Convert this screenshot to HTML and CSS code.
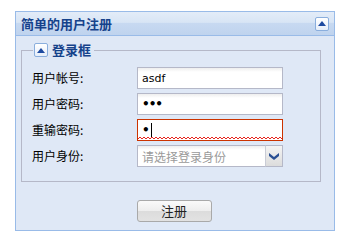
FILE: index.html
```html
<!DOCTYPE html>
<html lang="zh-CN">
<head>
<meta charset="utf-8">
<title>简单的用户注册</title>
<link rel="stylesheet" href="styles.css">
</head>
<body>
<div class="panel">
  <div class="panel-header">
    <span class="panel-title">简单的用户注册</span>
    <span class="tool"><svg width="8" height="5" viewBox="0 0 8 5"><path d="M0 5 L4 0 L8 5 Z" fill="#1d4aa0"/></svg></span>
  </div>
  <div class="panel-body">
    <div class="fieldset">
      <div class="legend">
        <span class="tool small"><svg width="8" height="5" viewBox="0 0 8 5"><path d="M0 5 L4 0 L8 5 Z" fill="#1d4aa0"/></svg></span>
        <span class="legend-text">登录框</span>
      </div>
      <div class="form">
        <label class="label">用户帐号:</label>
        <div class="field"><span class="val">asdf</span></div>
        <label class="label">用户密码:</label>
        <div class="field"><span class="val dots">•••</span></div>
        <label class="label">重输密码:</label>
        <div class="field invalid"><span class="val dots">•</span><span class="caret"></span>
          <svg class="zigzag" width="144" height="4" viewBox="0 0 144 4" preserveAspectRatio="none"><polyline points="0,3 2,1 4,3 6,1 8,3 10,1 12,3 14,1 16,3 18,1 20,3 22,1 24,3 26,1 28,3 30,1 32,3 34,1 36,3 38,1 40,3 42,1 44,3 46,1 48,3 50,1 52,3 54,1 56,3 58,1 60,3 62,1 64,3 66,1 68,3 70,1 72,3 74,1 76,3 78,1 80,3 82,1 84,3 86,1 88,3 90,1 92,3 94,1 96,3 98,1 100,3 102,1 104,3 106,1 108,3 110,1 112,3 114,1 116,3 118,1 120,3 122,1 124,3 126,1 128,3 130,1 132,3 134,1 136,3 138,1 140,3 142,1 144,3" fill="none" stroke="#e8241c" stroke-width="1"/></svg>
        </div>
        <label class="label">用户身份:</label>
        <div class="combo">
          <div class="field combo-input"><span class="val placeholder">请选择登录身份</span></div>
          <div class="trigger"><svg width="10" height="7" viewBox="0 0 10 7"><path d="M0 0 L5 4 L10 0 L10 3 L5 7 L0 3 Z" fill="#2a4f93"/></svg></div>
        </div>
      </div>
    </div>
    <div class="actions">
      <button class="btn" type="button">注册</button>
    </div>
  </div>
</div>
</body>
</html>
```
FILE: styles.css
```css
html, body {
  margin: 0;
  padding: 0;
  background: #ffffff;
}
body {
  font-family: "Noto Sans CJK SC", "DejaVu Sans", sans-serif;
  font-size: 12px;
}
.panel {
  margin: 11px 0 0 15px;
  width: 318px;
  border: 1px solid #99bbe8;
  box-shadow: 0 1px 0 #c8daf2;
}
.panel-header {
  height: 23px;
  border-bottom: 1px solid #99bbe8;
  background: linear-gradient(#e3ecf8 0%, #d8e5f5 45%, #c7d9f1 50%, #bfd3ee 100%);
  display: flex;
  align-items: center;
  justify-content: space-between;
  padding: 0 5px;
}
.panel-title {
  color: #15428b;
  font-weight: bold;
  font-size: 13px;
  line-height: 14px;
}
.tool {
  width: 12px;
  height: 12px;
  border: 1px solid #8aaedd;
  border-radius: 2px;
  background: linear-gradient(#ffffff, #e6eefa);
  display: flex;
  align-items: center;
  justify-content: center;
}
.tool svg { display: block; }
.panel-body {
  background: #dfe8f6;
  height: 194px;
  padding-top: 14px;
  box-sizing: border-box;
}
.fieldset {
  margin: 0 13px 0 5px;
  border: 1px solid #b5b8c8;
  padding: 0 10px 14px 10px;
}
.legend {
  display: flex;
  align-items: center;
  gap: 4px;
  margin: -8px 0 0 1px;
  padding: 0 3px 0 1px;
  height: 14px;
  width: fit-content;
  background: #dfe8f6;
}
.legend-text {
  color: #15428b;
  font-weight: bold;
  font-size: 13px;
  line-height: 14px;
}
.form {
  margin-top: 10px;
  display: grid;
  grid-template-columns: 105px 146px;
  grid-auto-rows: 22px;
  row-gap: 4px;
  align-items: center;
}
.label {
  color: #000;
  font-size: 12px;
  line-height: 14px;
}
.field {
  position: relative;
  height: 22px;
  box-sizing: border-box;
  border: 1px solid #b5b8c8;
  background: linear-gradient(#eeeeee 0, #ffffff 4px, #ffffff 100%);
  display: flex;
  align-items: center;
  padding-left: 4px;
}
.val {
  font-family: "DejaVu Sans", sans-serif;
  font-size: 11px;
  color: #000;
}
.dots {
  font-size: 12px;
  font-weight: bold;
  letter-spacing: -1px;
}
.caret {
  width: 1px;
  height: 14px;
  background: #000;
  margin-left: 2px;
}
.invalid {
  border-color: #cc3300;
  background: #ffffff;
}
.zigzag {
  position: absolute;
  left: 0;
  bottom: 0;
  width: 144px;
  height: 4px;
}
.combo {
  display: flex;
  height: 22px;
}
.combo-input {
  flex: 1;
  border-right: none;
}
.placeholder {
  font-family: "Noto Sans CJK SC", sans-serif;
  font-size: 12px;
  color: #9a9a9a;
}
.trigger {
  width: 18px;
  height: 22px;
  box-sizing: border-box;
  border: 1px solid #b5b8c8;
  border-left: 1px solid #c9ccd6;
  background: linear-gradient(#f4f4f4, #dcdcdc);
  display: flex;
  align-items: center;
  justify-content: center;
}
.actions {
  display: flex;
  justify-content: center;
  margin-top: 18px;
  padding-right: 2px;
}
.btn {
  width: 75px;
  height: 22px;
  border: 1px solid #a9a9a9;
  border-radius: 3px;
  background: linear-gradient(#fafafa 0%, #eeeeee 48%, #dcdcdc 52%, #e2e2e2 100%);
  font-family: "Noto Sans CJK SC", sans-serif;
  font-size: 13px;
  color: #222;
  padding: 0;
  line-height: 18px;
}
```
